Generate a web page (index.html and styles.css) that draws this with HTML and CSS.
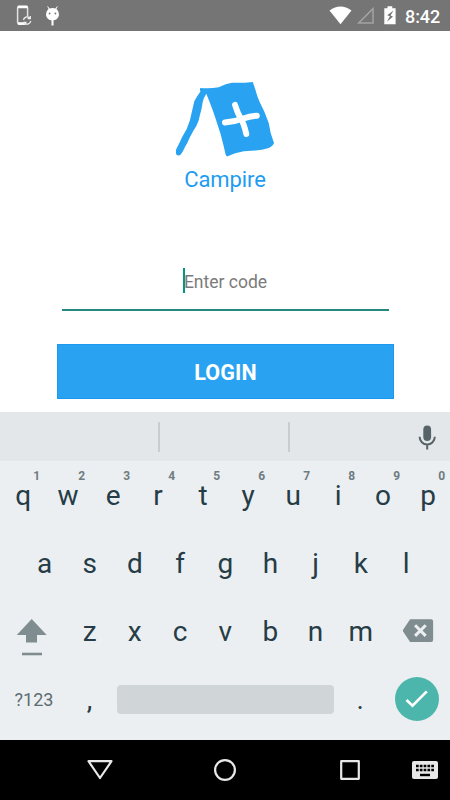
FILE: index.html
```
<!DOCTYPE html>
<html lang="en">
<head>
<meta charset="utf-8">
<title>Campire</title>
<link rel="stylesheet" href="styles.css">
</head>
<body>
<div class="screen">
  <header class="status">
    <svg class="status-left" width="70" height="31" viewBox="0 0 70 31">
      <rect x="17.6" y="6.2" width="10" height="18" rx="1.6" fill="none" stroke="#e2e2e2" stroke-width="1.5"/>
      <path d="M18 7h9.500M18 23.500h7" stroke="#fff" stroke-width="2.400"/>
      <circle cx="27.3" cy="20.5" r="4.2" fill="#757575"/>
      <path d="M23.5 20a3.600 3.600 0 0 1 6-2.200M30.300 16v2.700h-2.700M30.700 21a3.600 3.600 0 0 1-6 2.200M23.800 25v-2.600h2.700" fill="none" stroke="#f2f2f2" stroke-width="1.300"/>
      <path d="M46 14.200a6.500 6.500 0 0 1 2.600-5.100L47.200 6.500l.6-.3 1.800 2.400a7 7 0 0 1 5.800 0l1.800-2.400.6.3-1.400 2.600a6.500 6.500 0 0 1 2.600 5.100c0 3.600-2.900 6.200-6.500 6.200S46 17.800 46 14.200z" fill="#fff"/>
      <path d="M52.500 20v5.500" stroke="#fff" stroke-width="2"/>
      <circle cx="49.600" cy="13.500" r=".9" fill="#757575"/><circle cx="55.400" cy="13.500" r=".9" fill="#757575"/>
    </svg>
    <div class="status-right">
      <svg width="72" height="31" viewBox="328 0 72 31">
        <path d="M329.500 10.600Q340.500 2.500 351.500 10.600L340.500 24.200z" fill="#fff"/>
        <path d="M373 8.600V23H358.700z" fill="none" stroke="#a3a3a3" stroke-width="1.500"/>
        <path d="M384.300 8.300h3.200V6.200h4.800v2.100h3.300v15.900h-11.300z" fill="#fff"/>
        <path d="M393.500 10.500l-6.300 4.800 2.700 1-2.900 5.500 6-5.300-2.500-1z" fill="#757575"/>
      </svg>
      <span class="clock">8:42</span>
    </div>
  </header>

  <main class="login">
    <svg class="logo" width="100" height="77" viewBox="175 81 100 77">
      <path d="M200.300 87.900Q210 88.800 218.700 87.200Q226 83.500 232 82.700Q243 83 252.700 81.900C255 87 256.500 95 259.300 101.300Q265 112 268.700 123Q270 133 274 143Q273 146 268.700 148Q262 150.300 255.300 150.500L243.700 151.300Q235 152.500 227 156.500Q225.500 155.500 225 152L223.700 146.300Q221 134 217 123Q213 110 206.300 93.800Q203.800 97 202.500 103Q201.800 109 200 114.700Q199 121 196.300 126Q193 131 190 137Q187.500 143 185 147L182.500 152Q180.500 155.500 178.700 155.600Q176 155.500 176 153.500V149.700Q179.500 143 182.300 136.700Q187.500 129 190 120L191.200 114.700L194.300 101.300Q197 96 200.500 91.500Q199.500 90 200.300 87.900z" fill="#29a3f1"/>
      <path d="M235 104.800Q237.500 113 240.800 118.500T246.300 134M225 122.500Q235 121.700 242.500 118.800T256.800 115.700" fill="none" stroke="#fff" stroke-width="5.900" stroke-linecap="round"/>
    </svg>
    <h1 class="brand">Campire</h1>
    <div class="field"><span class="caret"></span><span class="hint">Enter code</span></div>
    <button class="login-button">LOGIN</button>
  </main>

  <section class="keyboard">
    <div class="suggestions">
      <svg class="mic" width="22" height="28" viewBox="416 424 22 28">
        <rect x="423.300" y="425.500" width="7.800" height="15.500" rx="3.900" fill="#566469"/>
        <path d="M419.600 436.800a7.600 7.600 0 0 0 15.200 0M427.200 444.500v5" fill="none" stroke="#566469" stroke-width="2"/>
      </svg>
    </div>
    <div class="row ten">
      <span class="key">q<sup>1</sup></span><span class="key">w<sup>2</sup></span><span class="key">e<sup>3</sup></span><span class="key">r<sup>4</sup></span><span class="key">t<sup>5</sup></span><span class="key">y<sup>6</sup></span><span class="key">u<sup>7</sup></span><span class="key">i<sup>8</sup></span><span class="key">o<sup>9</sup></span><span class="key">p<sup>0</sup></span>
    </div>
    <div class="row nine">
      <span class="key">a</span><span class="key">s</span><span class="key">d</span><span class="key">f</span><span class="key">g</span><span class="key">h</span><span class="key">j</span><span class="key">k</span><span class="key">l</span>
    </div>
    <div class="row third">
      <svg width="67" height="68" viewBox="0 598 67 68">
        <path d="M31.700 619l15 16H37v7.500H26V635h-9.200z" fill="#7f8c90"/>
        <path d="M22 654h20" stroke="#7f8c90" stroke-width="2.600"/>
      </svg>
      <span class="key">z</span><span class="key">x</span><span class="key">c</span><span class="key">v</span><span class="key">b</span><span class="key">n</span><span class="key">m</span>
      <svg width="67" height="68" viewBox="383.400 598 67 68">
        <path d="M410.500 619.300H431.500a2 2 0 0 1 2 2V640a2 2 0 0 1-2 2H410.500L403.500 631.500Q403 630.600 403.500 629.800z" fill="#7f8c90"/>
        <path d="M415.500 625.300l10.600 10.600M426.100 625.300l-10.600 10.600" stroke="#eceff1" stroke-width="3"/>
      </svg>
    </div>
    <div class="row bottom">
      <span class="symbols">?123</span>
      <span class="key comma">,</span>
      <span class="space"></span>
      <span class="key dot">.</span>
      <span class="done"><svg width="44" height="44" viewBox="395 677 44 44"><path d="M406.500 700l6 5.700 14.300-14.300" fill="none" stroke="#fff" stroke-width="2.700"/></svg></span>
    </div>
  </section>

  <nav class="navbar">
    <svg width="450" height="60" viewBox="0 740 450 60">
      <g fill="none" stroke="#e8e8e8" stroke-width="2.200" stroke-linejoin="round">
        <path d="M88.500 761.200h23L100 778z"/>
        <circle cx="225" cy="770" r="9.900"/>
        <rect x="341.200" y="761.200" width="17.600" height="17.600"/>
      </g>
      <rect x="412" y="761" width="26" height="18" rx="2" fill="#e8e8e8"/>
      <path d="M416 766h18M416 770h18" stroke="#000" stroke-width="2.600" stroke-dasharray="2.700 1.120"/>
      <path d="M420 775h10" stroke="#000" stroke-width="2.400"/>
    </svg>
  </nav>
</div>
</body>
</html>
```
FILE: styles.css
```
* { box-sizing: border-box; }
body { margin: 0; font-family: Roboto, "Liberation Sans", sans-serif; }
.screen { width: 450px; height: 800px; display: flex; flex-direction: column; overflow: hidden; background: #fff; }
svg { display: block; flex: none; }

.status { height: 31px; background: #757575; display: flex; justify-content: space-between; }
.status-right { display: flex; padding-right: 10px; }
.clock { color: #fff; font-size: 18px; font-weight: 500; line-height: 33px; width: 35px; margin-left: 5px; letter-spacing: -0.1px; white-space: nowrap; }

.login { height: 381px; display: flex; flex-direction: column; align-items: center; padding-top: 50px; }
.brand { margin: 7px 0 0; font-size: 22px; font-weight: 400; line-height: 30px; color: #1e9cf0; letter-spacing: -0.1px; }
.field { width: 327px; height: 46px; margin-top: 69.5px; border-bottom: 2px solid #26897f; display: flex; justify-content: center; }
.caret { width: 2px; height: 25px; margin: 3px -1px 0 0; background: #009688; }
.hint { font-size: 17.5px; line-height: 34px; color: #7b7b7b; }
.login-button { width: 337px; height: 55px; margin: 33px 0 0; padding: 2px 0 0 1px; border: 1px solid #1b99ee; background: #29a3f1; color: #fff; font: bold 21.5px/51px Roboto, sans-serif; letter-spacing: 0.1px; }

.keyboard { height: 328px; background: #eceff1; }
.suggestions { height: 50px; border-bottom: 1px solid #eef1f2; padding: 12px 12px 0 0; display: flex; justify-content: flex-end; background: linear-gradient(#c8cdd0, #c8cdd0) 158px 10px / 2px 30px no-repeat, linear-gradient(#c8cdd0, #c8cdd0) 288px 10px / 2px 30px no-repeat, #e3e7e9; }
.row { height: 68px; display: flex; }
.key { position: relative; width: 45.2px; flex: none; text-align: center; font-size: 28px; line-height: 68px; color: #263c46; }
.ten { padding-left: 0.6px; }
.ten .key { width: 45px; }
.key sup { position: absolute; right: 5.5px; top: 7px; font-size: 12px; line-height: 14px; font-weight: 700; color: #6f7c81; }
.nine { padding-left: 22px; }
.bottom { align-items: center; }
.symbols { width: 68px; text-align: center; font-size: 18px; line-height: 68px; color: #5b6c72; }
.comma { margin: 0 1px 0 -1px; }
.space { width: 217px; height: 29px; margin: 0 0 2px 3.5px; border-radius: 4px; background: #d0d5d8; }
.dot { margin-left: 4px; }
.done { width: 44px; height: 44px; margin: 0 0 2px 12px; border-radius: 50%; background: #4db6ac; }
.navbar { height: 60px; background: #000; }
```
